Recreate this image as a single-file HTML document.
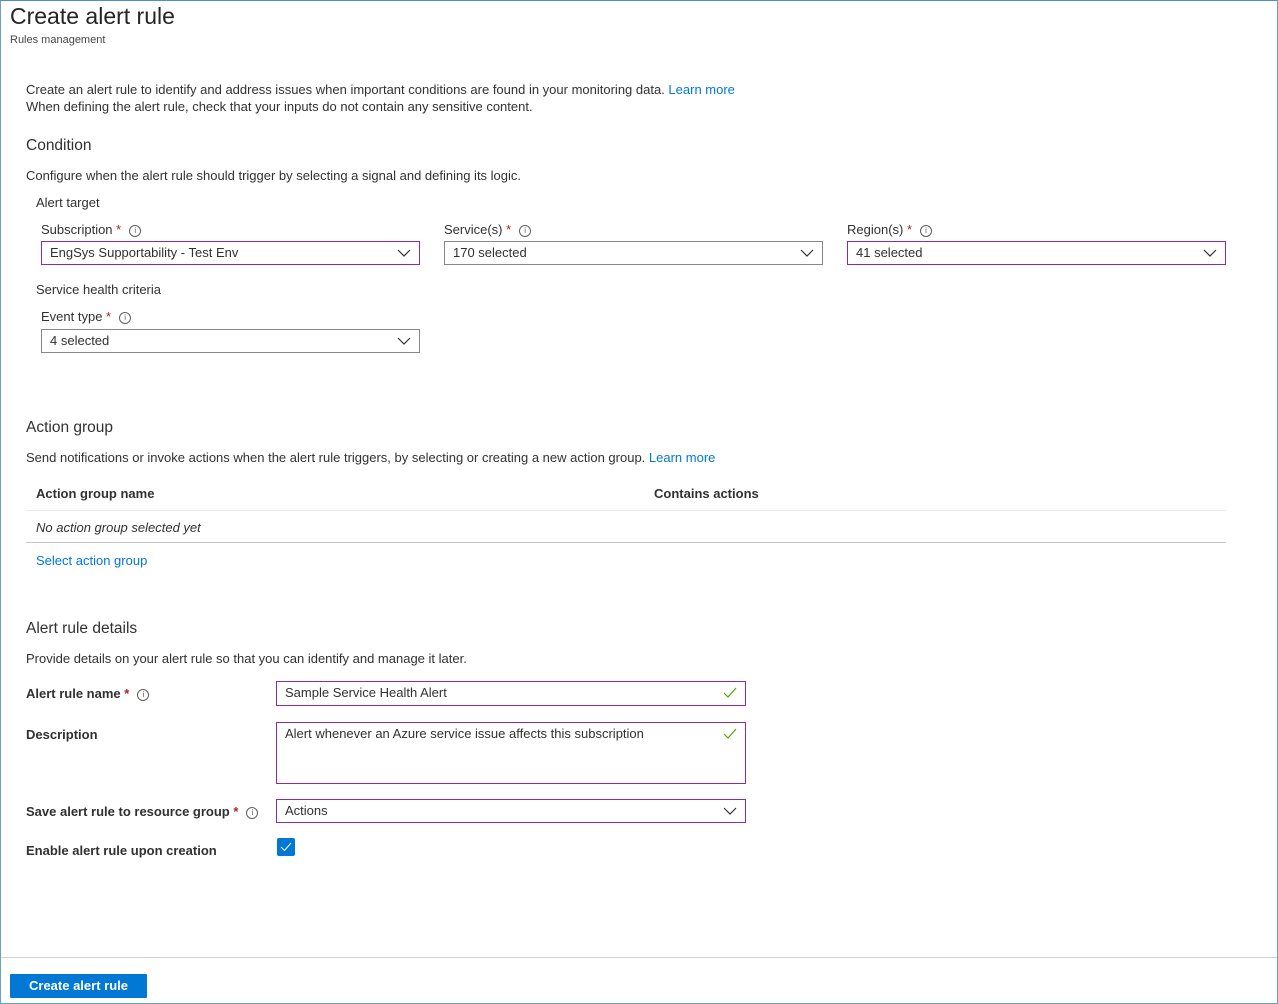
<!DOCTYPE html>
<html><head><meta charset="utf-8"><style>
*{box-sizing:border-box;margin:0;padding:0}
body{width:1278px;height:1004px;background:#fff;font-family:"Liberation Sans",sans-serif;color:#323130;font-size:13px;position:relative;overflow:hidden}
.frame{position:absolute;left:0;top:0;width:1278px;height:1004px;border:1px solid #6a9fc8;border-top-color:#4a90c8}
.a{position:absolute;white-space:nowrap}
.h{font-size:15.5px}
.req{color:#a4262c}
.info{display:inline-block;width:12px;height:12px;border:1px solid #605e5c;border-radius:50%;font-size:8px;line-height:10px;text-align:center;vertical-align:middle;margin-left:8px;color:#605e5c;font-weight:normal}
.dd{position:absolute;height:24px;border:1px solid #8a8886;padding:0 0 0 8px;line-height:22px;font-size:13px}
.dd.p{border-color:#8a2da5}
.chev{position:absolute;right:8px;top:6px}
.link{color:#0078d4}
.line{position:absolute;height:1px;background:#e1dfdd}
</style></head><body>
<div class="frame"></div>
<div class="a" style="left:10px;top:3px;font-size:23px;color:#252423">Create alert rule</div>
<div class="a" style="left:10px;top:34px;font-size:11px;color:#484644">Rules management</div>
<div class="a" style="left:26px;top:82px">Create an alert rule to identify and address issues when important conditions are found in your monitoring data. <span class="link">Learn more</span></div>
<div class="a" style="left:26px;top:99px">When defining the alert rule, check that your inputs do not contain any sensitive content.</div>
<div class="a h" style="left:26px;top:137px">Condition</div>
<div class="a" style="left:26px;top:168px">Configure when the alert rule should trigger by selecting a signal and defining its logic.</div>
<div class="a" style="left:36px;top:195px">Alert target</div>
<div class="a" style="left:41px;top:222px">Subscription <span class="req">*</span><span class="info">i</span></div>
<div class="a" style="left:444px;top:222px">Service(s) <span class="req">*</span><span class="info">i</span></div>
<div class="a" style="left:847px;top:222px">Region(s) <span class="req">*</span><span class="info">i</span></div>
<div class="dd p" style="left:41px;top:241px;width:379px">EngSys Supportability - Test Env<svg class="chev" width="14" height="10" viewBox="0 0 14 10"><path d="M1 2l6 6 6-6" fill="none" stroke="#323130" stroke-width="1.2"/></svg></div>
<div class="dd" style="left:444px;top:241px;width:379px">170 selected<svg class="chev" width="14" height="10" viewBox="0 0 14 10"><path d="M1 2l6 6 6-6" fill="none" stroke="#323130" stroke-width="1.2"/></svg></div>
<div class="dd p" style="left:847px;top:241px;width:379px">41 selected<svg class="chev" width="14" height="10" viewBox="0 0 14 10"><path d="M1 2l6 6 6-6" fill="none" stroke="#323130" stroke-width="1.2"/></svg></div>
<div class="a" style="left:36px;top:282px">Service health criteria</div>
<div class="a" style="left:41px;top:309px">Event type <span class="req">*</span><span class="info">i</span></div>
<div class="dd" style="left:41px;top:329px;width:379px">4 selected<svg class="chev" width="14" height="10" viewBox="0 0 14 10"><path d="M1 2l6 6 6-6" fill="none" stroke="#323130" stroke-width="1.2"/></svg></div>
<div class="a h" style="left:26px;top:419px">Action group</div>
<div class="a" style="left:26px;top:450px">Send notifications or invoke actions when the alert rule triggers, by selecting or creating a new action group. <span class="link">Learn more</span></div>
<div class="a" style="left:36px;top:486px;font-weight:bold">Action group name</div>
<div class="a" style="left:654px;top:486px;font-weight:bold">Contains actions</div>
<div class="line" style="left:26px;top:510px;width:1200px;background:#edebe9"></div>
<div class="a" style="left:36px;top:520px;font-style:italic">No action group selected yet</div>
<div class="line" style="left:26px;top:542px;width:1200px;background:#c8c6c4"></div>
<div class="a link" style="left:36px;top:553px">Select action group</div>
<div class="a h" style="left:26px;top:620px">Alert rule details</div>
<div class="a" style="left:26px;top:651px">Provide details on your alert rule so that you can identify and manage it later.</div>
<div class="a" style="left:26px;top:686px;font-weight:bold">Alert rule name <span class="req">*</span><span class="info">i</span></div>
<div class="dd p" style="left:276px;top:681px;width:470px;height:25px">Sample Service Health Alert<svg class="chev" style="top:5px" width="14" height="12" viewBox="0 0 14 12"><path d="M1 6l4 4 8-9" fill="none" stroke="#57a300" stroke-width="1.2"/></svg></div>
<div class="a" style="left:26px;top:727px;font-weight:bold">Description</div>
<div class="dd p" style="left:276px;top:722px;width:470px;height:62px;line-height:22px">Alert whenever an Azure service issue affects this subscription<svg class="chev" style="top:5px" width="14" height="12" viewBox="0 0 14 12"><path d="M1 6l4 4 8-9" fill="none" stroke="#57a300" stroke-width="1.2"/></svg></div>
<div class="a" style="left:26px;top:804px;font-weight:bold">Save alert rule to resource group <span class="req">*</span><span class="info">i</span></div>
<div class="dd p" style="left:276px;top:799px;width:470px">Actions<svg class="chev" width="14" height="10" viewBox="0 0 14 10"><path d="M1 2l6 6 6-6" fill="none" stroke="#323130" stroke-width="1.2"/></svg></div>
<div class="a" style="left:26px;top:843px;font-weight:bold">Enable alert rule upon creation</div>
<div class="a" style="left:277px;top:838px;width:18px;height:18px;background:#0078d4;border-radius:2px"><svg width="18" height="18" viewBox="0 0 18 18"><path d="M4 9l3.5 3.5L14 5" fill="none" stroke="#fff" stroke-width="1"/></svg></div>
<div class="line" style="left:1px;top:957px;width:1276px;background:#d2d0ce"></div>
<div class="a" style="left:10px;top:974px;width:137px;height:24px;background:#0078d4;color:#fff;font-weight:bold;text-align:center;line-height:24px;border-radius:1px">Create alert rule</div>
</body></html>
